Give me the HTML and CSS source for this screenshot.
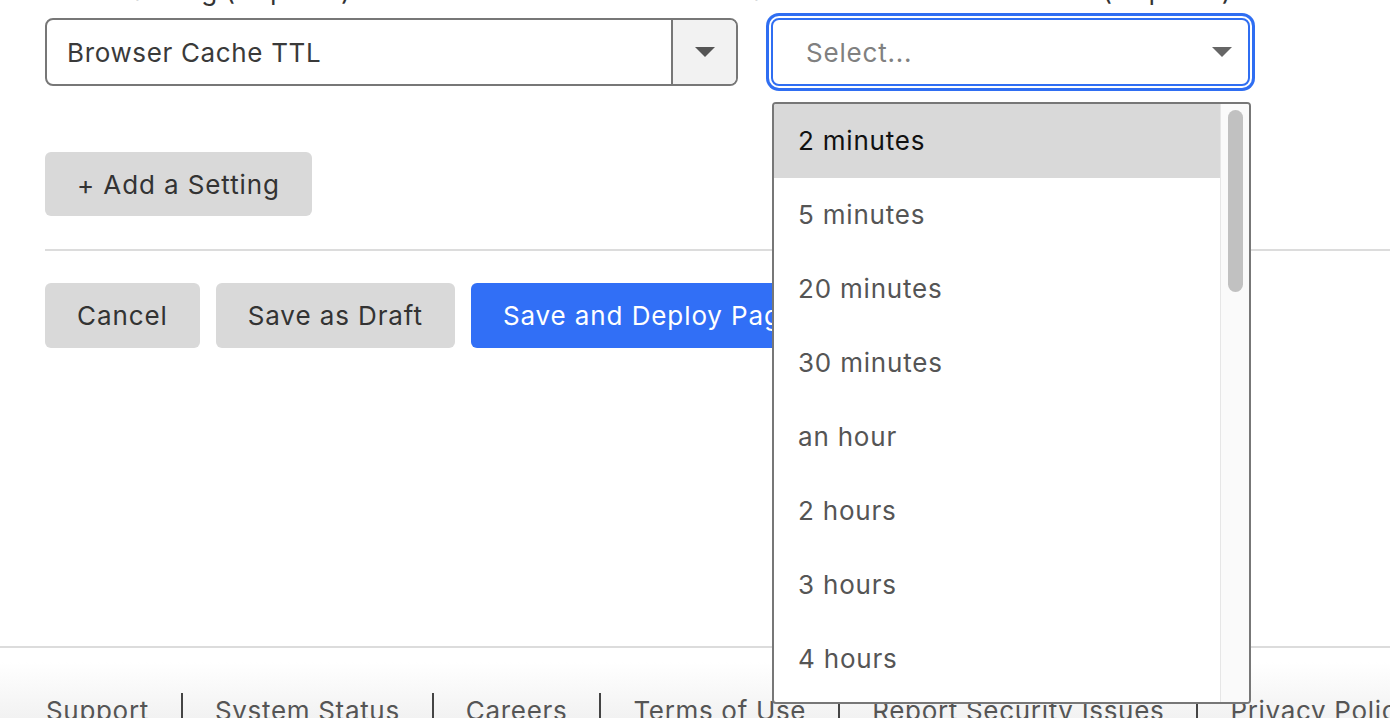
FILE: index.html
```html
<!DOCTYPE html>
<html lang="en">
<head>
<meta charset="utf-8">
<title>Page Rule</title>
<link rel="stylesheet" href="styles.css">
</head>
<body>
<main class="page">
  <div class="rule-row">
    <div class="field field-setting">
      <div class="field-label"><span>Pick a Setting (required)</span></div>
      <div class="select">
        <span class="select-value">Browser Cache TTL</span>
        <span class="select-toggle"><span class="caret"></span></span>
      </div>
    </div>
    <div class="field field-value">
      <div class="field-label"><span>Select Browser Cache TTL (required)</span></div>
      <div class="select select-focused">
        <span class="select-placeholder">Select...</span>
        <span class="caret caret-light"></span>
      </div>
      <div class="menu">
        <ul class="menu-list">
          <li class="menu-item is-active">2 minutes</li>
          <li class="menu-item">5 minutes</li>
          <li class="menu-item">20 minutes</li>
          <li class="menu-item">30 minutes</li>
          <li class="menu-item">an hour</li>
          <li class="menu-item">2 hours</li>
          <li class="menu-item">3 hours</li>
          <li class="menu-item">4 hours</li>
          <li class="menu-item">5 hours</li>
        </ul>
        <div class="menu-scrollbar"><div class="menu-thumb"></div></div>
      </div>
    </div>
  </div>

  <div class="add-row">
    <button class="btn btn-grey">+ Add a Setting</button>
  </div>

  <div class="divider"></div>

  <div class="actions">
    <button class="btn btn-grey">Cancel</button>
    <button class="btn btn-grey">Save as Draft</button>
    <button class="btn btn-blue">Save and Deploy Page Rule</button>
  </div>
</main>

<footer class="footer">
  <nav class="footer-links">
    <a class="footer-link">Support</a>
    <a class="footer-link">System Status</a>
    <a class="footer-link">Careers</a>
    <a class="footer-link">Terms of Use</a>
    <a class="footer-link">Report Security Issues</a>
    <a class="footer-link">Privacy Policy</a>
  </nav>
</footer>
</body>
</html>
```

FILE: styles.css
```css
* { box-sizing: border-box; }

html, body {
  margin: 0;
  padding: 0;
  background: #fff;
  overflow: hidden;
}

body {
  width: 1390px;
  height: 718px;
  font-family: Inter, "Noto Sans", "Liberation Sans", sans-serif;
  font-size: 26px;
  letter-spacing: 0.8px;
  color: #333;
}

.page {
  display: flow-root;
  padding-left: 45px;
  height: 646px;
}

.rule-row {
  display: flex;
  gap: 33px;
  margin-top: -25px;
}

.field { position: relative; }
.field-setting { width: 693px; }
.field-value { width: 479px; }

.field-label {
  display: flex;
  line-height: 32px;
  height: 32px;
  margin-bottom: 11px;
  color: #333;
  white-space: nowrap;
}
.field-setting .field-label { letter-spacing: 0.4px; }
.field-value .field-label {
  justify-content: flex-end;
  padding-right: 18px;
}

.select {
  height: 68px;
  border: 2px solid #777;
  border-radius: 8px;
  display: flex;
  align-items: center;
  background: #fff;
}

.select-value {
  flex: 1;
  padding-left: 20px;
  color: #3a3a3a;
  letter-spacing: 0.65px;
}

.select-toggle {
  width: 65px;
  align-self: stretch;
  border-left: 2px solid #777;
  background: #f2f2f2;
  border-radius: 0 6px 6px 0;
  display: flex;
  align-items: center;
  justify-content: center;
}

.caret {
  width: 0;
  height: 0;
  border-left: 10px solid transparent;
  border-right: 10px solid transparent;
  border-top: 10px solid #555;
}

.select-focused {
  border-color: #2f6ef2;
  box-shadow: 0 0 0 2px #fff, 0 0 0 5px #2f6ef2;
  justify-content: space-between;
  padding: 0 16px 0 33px;
}

.select-placeholder { color: #808080; }
.caret-light { border-top-color: #666; }

.menu {
  position: absolute;
  left: 1px;
  top: 127px;
  width: 479px;
  height: 602px;
  border: 2px solid #777;
  border-radius: 4px;
  background: #fff;
  display: flex;
  overflow: hidden;
  z-index: 10;
}

.menu-list {
  list-style: none;
  margin: 0;
  padding: 0;
  flex: 1;
  overflow: hidden;
}

.menu-item {
  height: 74px;
  line-height: 74px;
  padding-left: 24px;
  color: #555;
}

.menu-item.is-active {
  background: #d9d9d9;
  color: #111;
}

.menu-scrollbar {
  width: 29px;
  background: #fafafa;
  border-left: 1px solid #e6e6e6;
  padding: 6px 6px 0 7px;
}

.menu-thumb {
  height: 182px;
  background: #c1c1c1;
  border-radius: 8px;
}

.add-row { margin-top: 66px; }

.btn {
  font-family: inherit;
  font-size: 26px;
  letter-spacing: 0.9px;
  border: none;
  border-radius: 6px;
  height: 65px;
  padding: 0 32px;
  cursor: pointer;
}

.add-row .btn { height: 64px; }

.btn-grey {
  background: #d9d9d9;
  color: #333;
}

.btn-blue {
  background: #316ff6;
  color: #fff;
}

.divider {
  height: 2px;
  background: #dcdcdc;
  margin-top: 33px;
}

.actions {
  display: flex;
  gap: 16px;
  margin-top: 32px;
}

.footer {
  border-top: 2px solid #dcdcdc;
  height: 72px;
  background: linear-gradient(#fff 0%, #fff 20%, #f2f2f2 100%);
  padding: 45px 0 0 46px;
}

.footer-links {
  display: flex;
  white-space: nowrap;
}

.footer-link {
  color: #555;
  line-height: 32px;
  letter-spacing: 0.68px;
  padding: 2px 32px 0;
  border-left: 2px solid #444;
}

.footer-link:first-child {
  padding-left: 0;
  border-left: none;
}
```
